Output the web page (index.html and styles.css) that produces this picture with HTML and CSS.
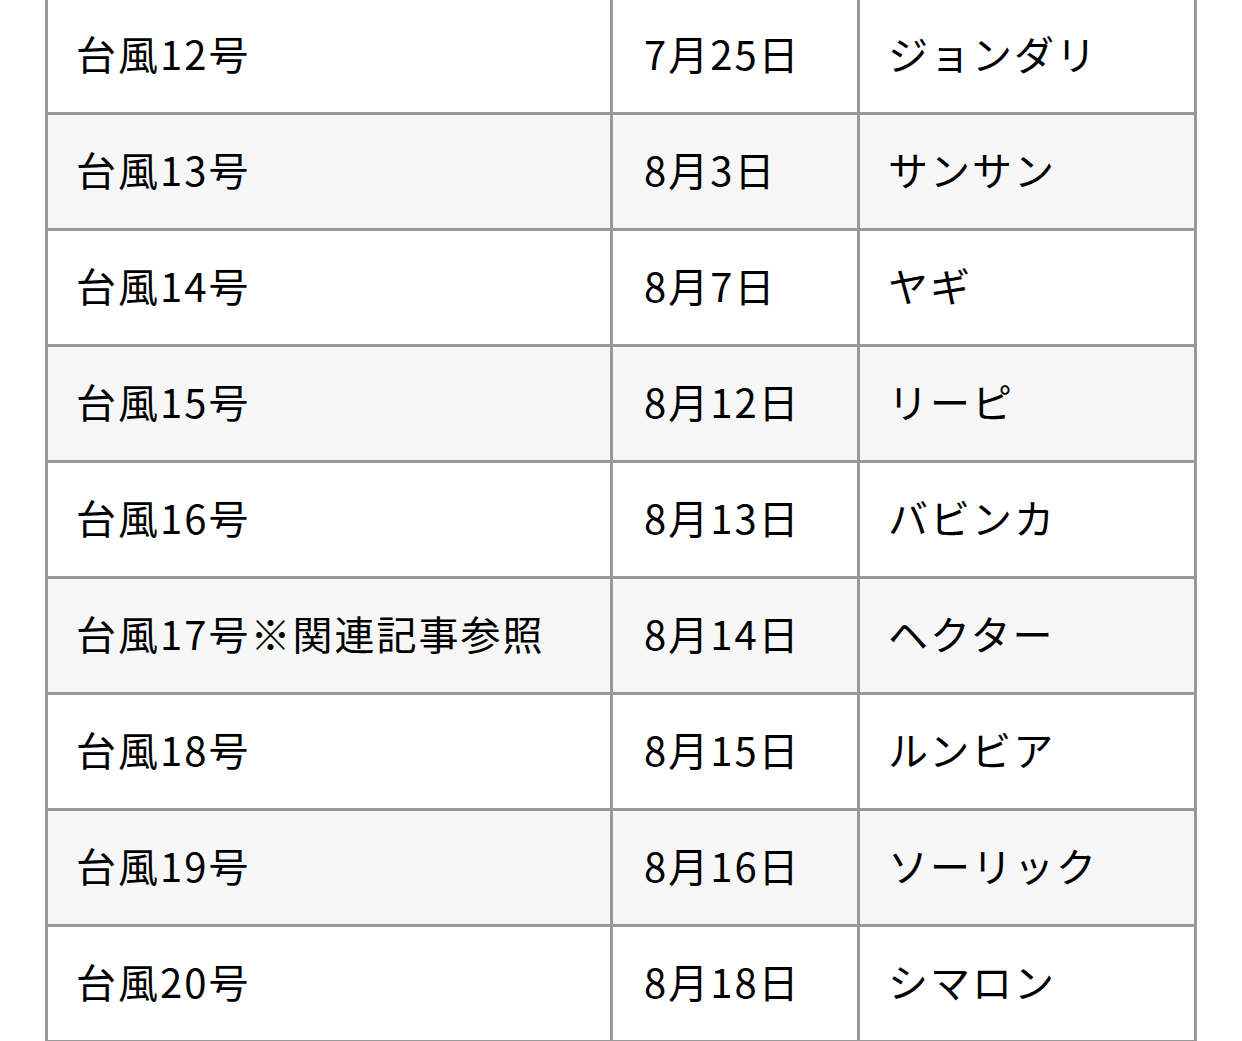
FILE: index.html
```html
<!DOCTYPE html>
<html lang="ja">
<head>
<meta charset="utf-8">
<link rel="stylesheet" href="styles.css">
</head>
<body>
<div class="table">
  <div class="cell c1">台風12号</div><div class="cell c2">7月25日</div><div class="cell c3">ジョンダリ</div>
  <div class="cell c1 alt">台風13号</div><div class="cell c2 alt">8月3日</div><div class="cell c3 alt">サンサン</div>
  <div class="cell c1">台風14号</div><div class="cell c2">8月7日</div><div class="cell c3">ヤギ</div>
  <div class="cell c1 alt">台風15号</div><div class="cell c2 alt">8月12日</div><div class="cell c3 alt">リーピ</div>
  <div class="cell c1">台風16号</div><div class="cell c2">8月13日</div><div class="cell c3">バビンカ</div>
  <div class="cell c1 alt">台風17号※関連記事参照</div><div class="cell c2 alt">8月14日</div><div class="cell c3 alt">ヘクター</div>
  <div class="cell c1">台風18号</div><div class="cell c2">8月15日</div><div class="cell c3">ルンビア</div>
  <div class="cell c1 alt">台風19号</div><div class="cell c2 alt">8月16日</div><div class="cell c3 alt">ソーリック</div>
  <div class="cell c1">台風20号</div><div class="cell c2">8月18日</div><div class="cell c3">シマロン</div>
</div>
</body>
</html>
```
FILE: styles.css
```css
html, body {
  margin: 0;
  padding: 0;
  background: #fff;
  overflow: hidden;
}
body {
  font-family: "Noto Sans CJK JP", "Noto Sans", sans-serif;
  color: #000;
}
.table {
  display: grid;
  grid-template-columns: 562px 244px 334px;
  grid-auto-rows: 113px;
  gap: 3px;
  padding: 3px;
  background: #999;
  width: max-content;
  margin: -4px 0 0 45px;
}
.cell {
  background: #fff;
  display: flex;
  align-items: center;
  font-size: 40px;
  line-height: 1;
  letter-spacing: 2px;
  white-space: nowrap;
  padding-bottom: 6px;
}
.cell.alt {
  background: #f7f7f7;
}
.c1 { padding-left: 28px; }
.c2 { padding-left: 31px; }
.c3 { padding-left: 28px; }
```
